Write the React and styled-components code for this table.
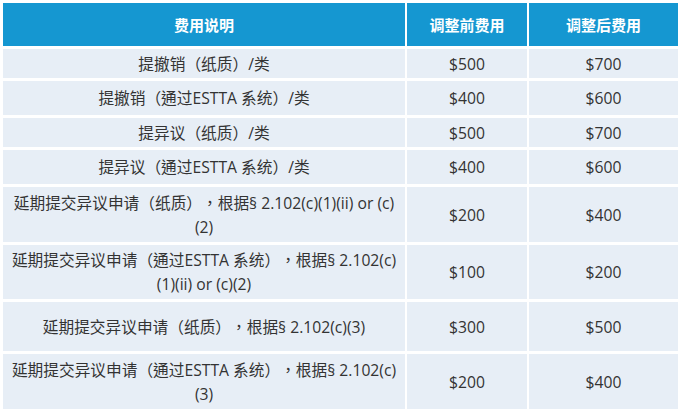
import React from "react";
import styled, { createGlobalStyle } from "styled-components";

const GlobalStyle = createGlobalStyle`
    body {
        margin: 0;
        background: #ffffff;
        font-family: "Open Sans", "Noto Sans CJK TC", sans-serif;
        text-spacing-trim: space-all;
    }
`;

const Wrapper = styled.div`
    padding: 3px 6px 3px 3px;
`;

const Table = styled.div`
    display: grid;
    grid-template-columns: 402px 120px 149px;
    column-gap: 2px;
    row-gap: 3px;
    width: 675px;
`;

const Row = styled.div`
    display: contents;

    & > div {
        height: ${props => props.h}px;
    }
`;

const HeadCell = styled.div`
    background-color: #1597d1;
    color: #ffffff;
    font-size: 15px;
    font-weight: 700;
    display: flex;
    align-items: center;
    justify-content: center;
`;

const Cell = styled.div`
    background-color: #e7eef6;
    color: #333333;
    font-size: 15.7px;
    line-height: 24px;
    padding: 0 3px;
    display: flex;
    align-items: center;
    justify-content: center;
    text-align: center;
`;

const FEES = [
    { h: 29, desc: <>提撤销（纸质）/类</>, before: "$500", after: "$700" },
    { h: 34, desc: <>提撤销（通过ESTTA 系统）/类</>, before: "$400", after: "$600" },
    { h: 29, desc: <>提异议（纸质）/类</>, before: "$500", after: "$700" },
    { h: 34, desc: <>提异议（通过ESTTA 系统）/类</>, before: "$400", after: "$600" },
    { h: 55, desc: <>延期提交异议申请（纸质），根据§ 2.102(c)(1)(ii) or (c)<br />(2)</>, before: "$200", after: "$400" },
    { h: 54, desc: <>延期提交异议申请（通过ESTTA 系统），根据§ 2.102(c)<br />(1)(ii) or (c)(2)</>, before: "$100", after: "$200" },
    { h: 49, desc: <>延期提交异议申请（纸质），根据§ 2.102(c)(3)</>, before: "$300", after: "$500" },
    { h: 55, desc: <>延期提交异议申请（通过ESTTA 系统），根据§ 2.102(c)<br />(3)</>, before: "$200", after: "$400" }
];

function App() {
    return (
        <Wrapper>
            <GlobalStyle />
            <Table>
                <Row h={43}>
                    <HeadCell>费用说明</HeadCell>
                    <HeadCell>调整前费用</HeadCell>
                    <HeadCell>调整后费用</HeadCell>
                </Row>
                {FEES.map((fee, i) => (
                    <Row key={i} h={fee.h}>
                        <Cell>
                            <span>{fee.desc}</span>
                        </Cell>
                        <Cell>{fee.before}</Cell>
                        <Cell>{fee.after}</Cell>
                    </Row>
                ))}
            </Table>
        </Wrapper>
    );
}

export default App;
